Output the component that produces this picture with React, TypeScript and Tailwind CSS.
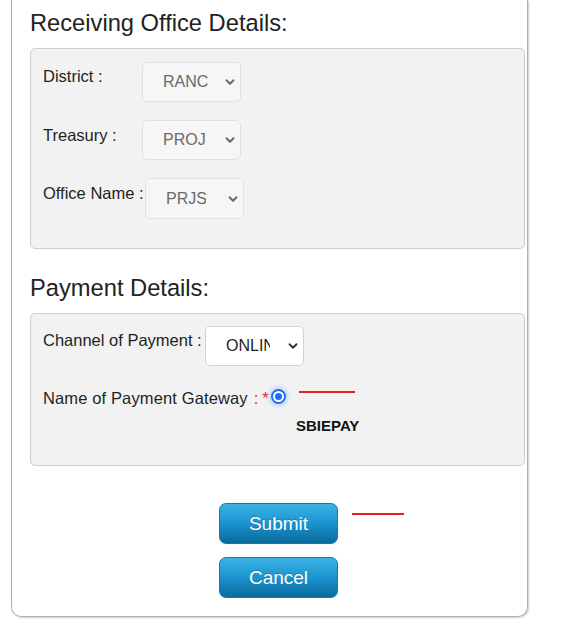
import React from 'react'
import { ChevronDown } from 'lucide-react'

type SelectProps = {
    value: string
    clip: string
    white?: boolean
    className?: string
}

const FakeSelect = ({ value, clip, white, className }: SelectProps) => {
    return (
        <div
            className={
                'h-[40px] w-[99px] shrink-0 rounded-[5px] border flex items-center pl-[20px] pr-[3px] justify-between ' +
                (white ? 'bg-white border-[#d3d3d3] text-[#1f1f1f]' : 'bg-[#f6f6f6] border-[#e1e1e1] text-[#6a6a6a]') +
                ' ' + (className ?? '')
            }
        >
            <span className={'overflow-hidden whitespace-nowrap text-[16px] leading-[18px] ' + clip}>{value}</span>
            <ChevronDown size={14} strokeWidth={3.2} className={white ? 'text-[#333]' : 'text-[#666]'} />
        </div>
    )
}

const App = () => {
    return (
        <div className="min-h-[632px] bg-white font-['Liberation_Sans',Arial,sans-serif] text-[#1f1f1f]">
            <div className="ml-[11px] w-[517px] border-x border-b border-[#b0b0b0] rounded-b-[10px] shadow-[1px_1px_2px_rgba(0,0,0,0.2)] pl-[18px] pr-[1px] pt-[9px] pb-[18px]">
                <h2 className="text-[23.7px] leading-[28px] text-[#222]">Receiving Office Details:</h2>

                <div className="mt-[11px] w-[495px] rounded-[5px] border border-[#cfcfcf] bg-[#f2f2f2] pl-[12px] pt-[13px] pb-[29px] flex flex-col gap-[18px] text-[16.5px] leading-[18px]">
                    <div className="flex items-start">
                        <div className="w-[99px] shrink-0 mt-[5px] whitespace-nowrap">District :</div>
                        <FakeSelect value="RANCHI" clip="w-[46px]" />
                    </div>
                    <div className="flex items-start">
                        <div className="w-[99px] shrink-0 mt-[6px] whitespace-nowrap">Treasury :</div>
                        <FakeSelect value="PROJECT" clip="w-[43px]" />
                    </div>
                    <div className="flex items-start">
                        <div className="w-[102px] shrink-0 mt-[6px] whitespace-nowrap">Office Name :</div>
                        <FakeSelect value="PRJSOG" clip="w-[40px]" className="h-[41px]" />
                    </div>
                </div>

                <h2 className="mt-[25px] text-[23.7px] leading-[28px] text-[#222]">Payment Details:</h2>

                <div className="mt-[11px] w-[495px] rounded-[5px] border border-[#cfcfcf] bg-[#f2f2f2] pl-[12px] pt-[12px] pb-[30px] text-[16.5px] leading-[18px]">
                    <div className="flex items-start">
                        <div className="w-[162px] shrink-0 mt-[5px] whitespace-nowrap">Channel of Payment :</div>
                        <FakeSelect value="ONLINE" clip="w-[44px]" white />
                    </div>
                    <div className="mt-[23px] flex items-start whitespace-nowrap">
                        <span className="tracking-[0.13px]">Name of Payment Gateway</span>
                        <span className="ml-[6px] text-[#e0312f]">:</span>
                        <span className="ml-[4px] text-[#e0312f]">*</span>
                        <div className="relative ml-[2px]">
                            <div className="w-[15px] h-[15px] rounded-full border-2 border-[#1a6ff2] bg-white flex items-center justify-center shadow-[0_0_3px_3px_rgba(80,150,255,0.22)]">
                                <div className="w-[7px] h-[7px] rounded-full bg-[#1a6ff2]" />
                            </div>
                            <div className="absolute left-[28px] top-[2px] w-[56px] h-[2px] bg-[#ee1c1c]" />
                        </div>
                    </div>
                    <div className="mt-[10px] pl-[253px] text-[15px] leading-[18px] font-bold text-[#111]">SBIEPAY</div>
                </div>

                <div className="mt-[37px] ml-[189px] flex flex-col gap-[13px]">
                    <div className="relative w-[119px]">
                        <button className="w-[119px] h-[41px] rounded-[7px] border border-[#1678ad] bg-linear-to-b from-[#3ab3e6] via-[#1b93cf] to-[#0a6a9c] text-white text-[19px] leading-[22px] [text-shadow:0_-1px_0_rgba(0,0,0,0.2)]">
                            Submit
                        </button>
                        <div className="absolute left-[133px] top-[10px] w-[52px] h-[2px] bg-[#ee1c1c]" />
                    </div>
                    <button className="w-[119px] h-[41px] rounded-[7px] border border-[#1678ad] bg-linear-to-b from-[#3ab3e6] via-[#1b93cf] to-[#0a6a9c] text-white text-[19px] leading-[22px] [text-shadow:0_-1px_0_rgba(0,0,0,0.2)]">
                        Cancel
                    </button>
                </div>
            </div>
        </div>
    )
}

export default App
